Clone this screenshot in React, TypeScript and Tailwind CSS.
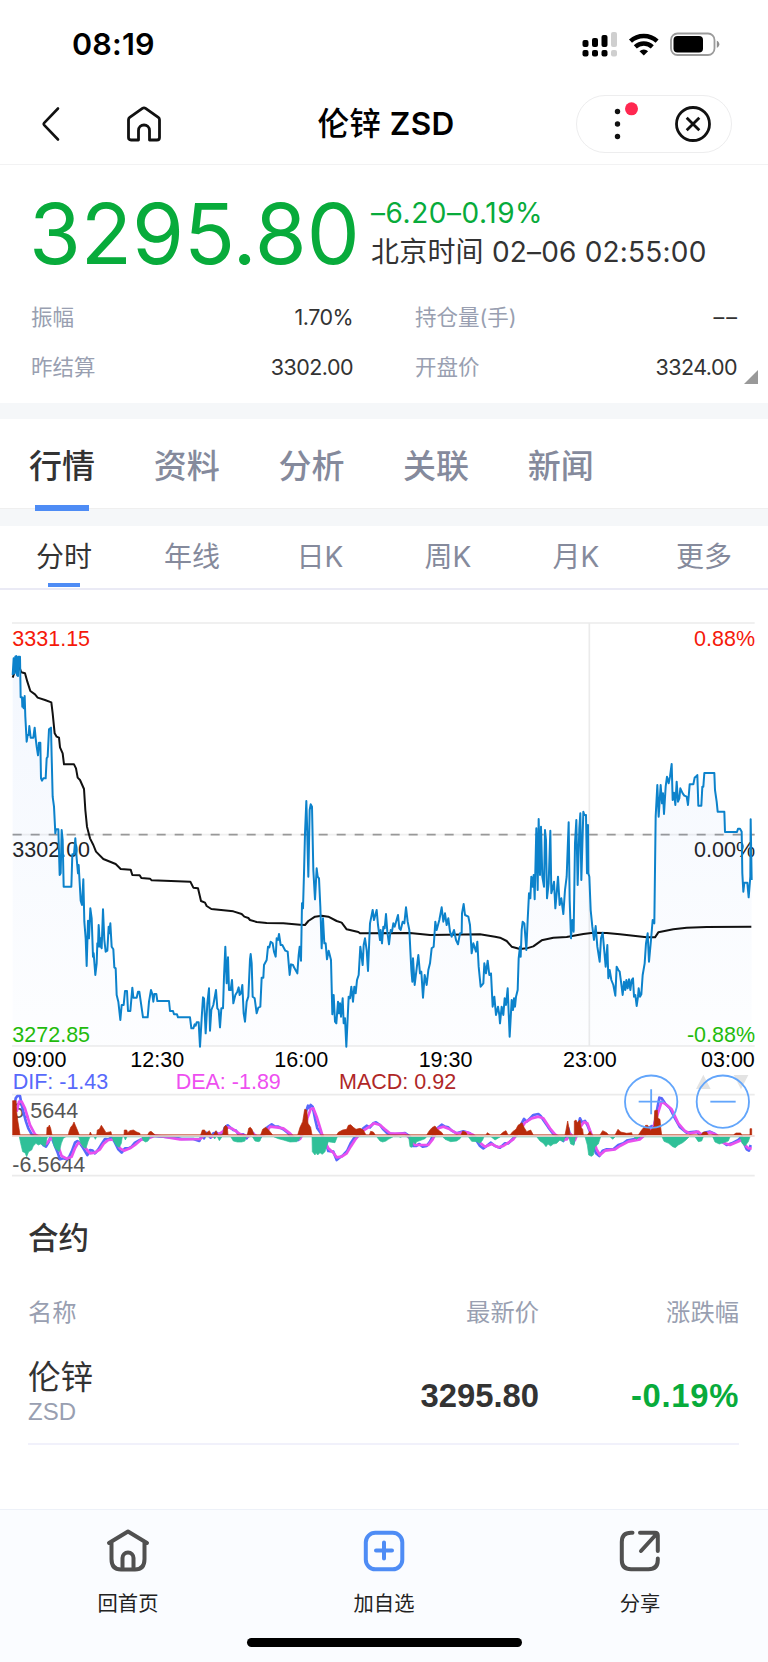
import type { ReactNode } from 'react';

interface Segment {
  offset: number;
  points: string;
}

interface Stat {
  label: string;
  value: string;
}

const stats: Stat[] = [
  { label: '振幅', value: '1.70%' },
  { label: '持仓量(手)', value: '– –' },
  { label: '昨结算', value: '3302.00' },
  { label: '开盘价', value: '3324.00' },
];

const mainTabs = ['行情', '资料', '分析', '关联', '新闻'];
const chartTabs = ['分时', '年线', '日K', '周K', '月K', '更多'];

const times = [
  { label: '09:00', x: 38 },
  { label: '12:30', x: 391 },
  { label: '16:00', x: 823 },
  { label: '19:30', x: 1256 },
  { label: '23:00', x: 1689 },
  { label: '03:00', x: 2103 },
];

// Chart units are a third of a CSS pixel
const priceSegments: Segment[] = [
  {
    offset: 0,
    points:
      '38,195 41,145 44,190 46,140 49,138 51,195 54,198 55,140 60,140 62,262 66,262 67,290 70,265 71,295 74,258 76,320 80,395 83,375 86,375 88,348 92,383 100,383 104,353 107,385 110,410 114,436 117,398 121,398 123,505 126,512 130,505 137,505 140,445 143,440 147,358 153,353 155,440 158,560 162,590 166,670 168,658 175,658 179,795 182,790 185,660 188,690 191,830 214,830 217,733 222,733 226,685 230,745 234,790 236,765 242,872 246,885 250,808 253,935 257,985 260,1068 264,932 267,985 271,895 275,925 279,1040 281,1030 286,1095 290,1060 292,1000 294,1010 296,945 300,1010 302,985 305,1015 309,898 313,990 317,1025 322,1022 326,950 328,970 331,940 335,1010 340,1018 343,1072 347,1075 350,1155 355,1175 361,1230 365,1185 371,1185 375,1143 381,1143 384,1203 391,1203 397,1133 400,1163 410,1163 414,1145 418,1145 429,1222 443,1222 447,1175 453,1140 457,1152 460,1175 463,1152 469,1152 472,1173 507,1173 510,1203 519,1203 522,1213 531,1213 534,1222 570,1222 574,1255 580,1255 584,1243 587,1247 590,1237 596,1237 600,1310 605,1225 609,1162 612,1165 617,1270 622,1180 627,1135 630,1262 634,1200 640,1185 648,1140 652,1195 656,1200 660,1252 664,1195 669,1195 672,1100 676,1010 680,1120 684,1042 687,1140 692,1140 696,1110 700,1180 706,1155 712,1145 716,1132 719,1155 723,1150 727,1125 731,1210 735,1235 740,1175 745,1160',
  },
  {
    offset: 750,
    points:
      '0,1048 2,1032 5,1060 8,1160 14,1165 20,1210 25,1193 31,1190 35,1103 40,1103 42,1065 50,1050 54,1010 58,1012 62,995 68,1000 72,1025 77,1040 80,985 84,990 87,972 92,1005 97,1005 106,1022 113,1025 119,1095 123,1063 129,1065 132,1072 142,1090 146,1035 149,1010 153,1052 156,880 159,895 162,790 165,670 169,573 171,640 175,800 179,600 182,583 186,590 190,780 195,868 200,775 203,800 207,805 211,890 215,1015 219,925 223,1000 227,1000 231,1048 236,1022 243,1050 247,1213 251,1155 255,1235 259,1240 264,1175 267,1210 270,1180 273,1220 278,1165 281,1240 285,1225 289,1310 296,1160 300,1165 304,1130 309,1175 313,1130 317,1150 321,1110 326,1095 331,1010 338,1065 341,1005 345,985 350,1020 354,1083 360,940 368,900 372,930 380,900 384,945 390,990 392,960 396,1000 400,950 404,955 408,912 412,965 417,1003 422,960 426,965 430,940 434,950 444,915 448,955 452,960 458,935 463,940 468,892 473,935 478,960 484,1080 487,1115 489,1045 494,1125 500,1075 505,1035 510,1090 514,1085 519,1163 524,1095 530,1125 535,1080 540,1060 545,1015 551,1010 556,935 560,960 568,930 575,892 580,935 585,910 590,945 595,925 600,965 605,980 612,960 618,990 624,1003 630,970 635,970 636,910 641,882 645,915 655,920 660,945 665,1030 670,1000 678,1025 682,995 686,1070 692,1130 700,1120 703,1060 708,1090 713,1052 718,1095 723,1090 728,1190 733,1160 738,1215 744,1190 748,1215',
  },
  {
    offset: 1500,
    points:
      '0,1240 5,1190 10,1215 14,1165 18,1185 23,1135 29,1280 35,1170 39,1200 42,1165 45,1190 48,1160 53,1140 56,1045 60,1010 62,1040 65,960 68,935 73,940 79,1020 83,930 87,850 91,865 94,800 98,830 101,795 104,868 109,655 113,840 116,627 120,795 123,650 127,800 132,830 135,660 138,690 141,865 146,820 151,662 154,850 158,835 162,815 166,895 170,850 174,800 179,885 184,865 190,912 195,840 200,800 206,637 209,870 213,985 217,930 221,965 225,700 229,630 233,825 238,655 241,610 244,810 250,605 253,615 258,615 261,790 264,645 265,790 268,800 272,900 277,950 282,990 287,948 292,1010 299,1055 303,985 308,968 313,1025 317,1070 322,1005 325,1105 329,1080 334,1110 340,1125 346,1157 350,1070 355,1080 359,1085 363,1115 368,1155 372,1115 376,1140 379,1110 383,1135 387,1108 391,1140 395,1110 399,1105 402,1160 406,1155 410,1188 414,1160 416,1135 420,1160 424,1153 428,1095 434,1060 438,1000 443,970 447,1055 453,990 458,930 463,940 467,620 472,525 476,620 482,525 486,580 489,550 492,612 497,530 501,500 506,520 510,500 515,462 518,570 522,548 526,585 530,515 534,575 538,565 541,535 548,550 553,557 560,560 564,585 569,523 580,523 584,503 588,500 592,495 595,587 604,587 607,530 610,530 613,489 643,489 645,540 650,575 653,605 673,605 675,666 711,666 714,656 720,656 725,665 727,790 730,845 733,818 742,818 746,862 751,800 752,628 755,810',
  },
];

const averageSegments: Segment[] = [
  {
    offset: 0,
    points:
      '38,203 46,180 56,165 64,187 75,190 82,215 91,243 105,253 113,263 135,270 154,277 158,310 164,370 170,380 177,383 180,412 188,430 192,463 222,463 228,475 233,503 240,510 252,537 256,600 261,650 270,685 280,705 288,725 310,747 347,762 362,777 392,779 397,795 419,796 424,804 450,806 455,811 571,815 580,833 594,835 603,873 615,878 620,888 634,897 700,904 725,912 733,920 745,924',
  },
  {
    offset: 750,
    points:
      '0,930 20,936 50,939 100,940 150,944 165,945 175,933 195,920 215,917 235,920 260,933 275,938 290,958 325,966 330,970 480,969 540,975 690,973 735,980',
  },
  {
    offset: 1500,
    points:
      '0,983 20,993 35,1010 60,1017 80,1015 100,1009 125,991 160,983 200,981 250,972 280,968 320,969 360,973 400,977 440,982 465,982 475,967 520,958 560,953 620,951 754,950',
  },
];

const difSegments: Segment[] = [
  {
    offset: 0,
    points:
      '44,195 47,175 52,168 60,168 64,190 70,215 78,245 85,265 95,283 105,288 120,300 130,315 138,320 145,308 152,290 158,300 165,318 172,335 180,358 190,355 200,358 208,350 215,335 225,308 232,303 240,310 250,325 262,345 270,330 278,332 285,340 295,328 305,312 315,297 325,298 335,292 345,308 355,328 365,338 375,325 385,325 395,320 405,308 420,300 430,296 440,300 455,285 465,288 490,290 520,292 545,297 580,297 598,303 606,285 612,295 618,278 625,282 632,293 640,280 650,278 658,285 668,280 675,262 683,256 690,262 700,270 708,272 715,282 730,283 740,295 752,272 760,280 768,295 780,293 790,280 802,262 815,253 825,260 835,260 850,268 865,280 880,300 895,300 905,285 912,260 918,215 924,197 928,205 932,195 938,200 945,235 952,265 965,283 978,310 985,333 1000,335 1010,360 1020,352 1030,345 1042,332 1052,310 1062,295 1075,285 1090,265 1100,257 1110,262 1120,250 1128,247',
  },
  {
    offset: 1140,
    points:
      '0,255 10,268 22,280 45,283 75,279 90,290 100,318 108,318 118,312 128,320 140,318 150,305 160,285 172,265 185,254 195,260 205,262 215,272 230,280 250,274 270,280 285,295 300,318 310,325 320,318 332,308 345,318 360,323 375,310 385,310 395,300 405,290 415,275 425,250 432,237 440,245 450,235 460,225 475,222 482,228 490,240 505,262 520,282 535,292 550,303 560,290 565,265 570,285 580,310 590,275 600,235 606,248 615,243 622,255 632,280 640,315 648,340 658,348 668,332 680,328 700,328 715,315 730,310 740,302 760,298 775,298 790,285 800,268 815,258 822,262 830,215 838,173 845,175 855,190 870,205 885,235 900,262 920,278 950,275 960,285 975,278 990,275 1005,282 1020,300 1040,315 1055,310 1075,300 1085,290 1092,310 1100,328 1107,332 1112,315',
  },
];

const deaSegments: Segment[] = [
  {
    offset: 0,
    points:
      '50,215 57,185 65,185 75,205 90,255 105,283 120,292 130,310 140,310 152,295 165,300 175,320 185,348 200,356 215,350 225,325 235,308 245,312 260,328 270,340 285,338 300,328 312,310 325,300 345,298 360,325 372,332 390,325 405,315 425,298 445,295 465,287 490,290 540,298 600,297 615,285 635,290 660,280 675,270 685,262 700,268 720,282 745,290 755,278 775,292 795,282 810,260 830,262 850,265 870,280 885,297 900,297 912,275 922,235 932,207 940,205 950,230 960,262 970,295 985,325 1000,338 1010,352 1025,350 1040,340 1052,320 1065,300 1085,275 1105,262 1122,250',
  },
  {
    offset: 1140,
    points:
      '0,255 15,268 30,280 75,281 95,300 105,315 125,315 145,315 158,298 175,265 190,260 210,268 230,280 260,277 280,285 300,308 315,320 335,312 355,322 370,318 385,308 400,298 420,270 435,248 455,235 475,230 490,235 510,265 525,283 545,298 560,298 572,282 585,300 600,262 612,246 622,250 635,285 650,328 660,345 675,332 705,328 720,318 745,305 780,298 800,280 820,262 832,225 845,185 860,195 875,208 895,250 915,273 930,280 955,275 965,285 990,277 1010,285 1030,308 1050,315 1085,300 1095,315 1105,325 1115,325',
  },
];

const positiveBars: Segment[] = [
  {
    offset: 0,
    points:
      '38,285 38,182 48,182 50,215 53,240 57,265 60,285 140,285 141,262 145,262 148,255 152,265 156,285 205,285 207,275 212,262 218,255 222,246 226,256 232,270 238,285 268,285 271,276 275,285 290,285 292,270 298,268 304,256 310,265 318,278 333,275 335,285 372,285 373,270 380,270 383,278 390,272 400,270 410,276 420,280 420,285 443,285 447,277 453,274 460,280 466,285 602,285 607,270 614,270 618,280 628,272 635,285 640,285 648,272 654,285 668,285 672,262 677,256 682,262 684,285 742,285 746,265 751,262 756,268 762,285 782,285 788,268 797,262 806,270 818,285 893,285 900,262 908,245 914,208 920,210 924,250 932,262 936,285 1010,285 1015,277 1028,270 1040,268 1045,256 1052,254 1060,262 1068,268 1080,265 1090,270 1098,285 1108,285 1112,274 1120,276 1126,285',
  },
  {
    offset: 1140,
    points:
      '140,285 148,272 156,263 165,258 172,268 186,278 190,285 243,285 248,273 258,277 262,285 318,285 322,278 332,285 360,285 370,276 378,272 384,285 390,285 398,275 408,268 414,256 426,248 432,262 440,275 452,270 460,285 555,285 558,270 563,243 568,270 570,285 583,285 583,243 588,240 592,248 600,240 603,262 608,268 610,285 622,285 630,274 636,285 660,285 668,272 680,278 686,285 705,285 714,268 722,276 740,280 755,278 757,285 775,285 785,270 797,256 803,256 806,262 812,272 822,258 824,212 832,210 834,235 840,238 842,262 845,285 963,285 970,276 980,276 984,285 1060,285 1068,279 1082,279 1085,285 1110,285 1110,266 1115,266 1115,285',
  },
];

const negativeBars: Segment[] = [
  {
    offset: 0,
    points:
      '58,290 62,310 68,335 75,338 80,350 86,335 95,330 100,318 108,310 115,315 122,312 128,315 135,320 140,300 142,290 156,290 160,312 165,325 172,330 178,335 184,310 190,295 198,290 236,290 242,310 250,322 258,325 264,305 270,290 282,290 286,298 290,290 335,290 342,305 350,318 358,322 364,310 367,290 372,290 376,300 381,290 425,290 430,302 437,306 444,303 450,290 640,290 644,297 648,290 652,290 658,302 666,290 692,290 700,303 712,306 725,306 735,303 738,290 757,290 765,303 775,305 780,303 784,290 820,290 835,296 850,300 870,306 890,305 898,298 902,290 936,290 937,335 945,345 948,338 953,345 960,338 967,343 975,335 980,318 985,305 995,307 1005,308 1012,290 1130,290',
  },
  {
    offset: 1140,
    points:
      '0,303 8,306 18,303 25,298 40,290 55,290 62,292 66,290 86,290 90,320 96,322 100,305 106,312 110,305 125,300 135,296 140,290 188,290 195,298 212,305 230,303 240,296 244,290 265,290 275,304 290,305 300,310 308,300 312,290 333,290 345,300 355,294 362,290 470,290 480,303 490,310 498,320 504,312 512,318 520,312 530,310 540,300 550,305 556,290 566,290 572,312 582,316 586,290 615,290 622,315 626,345 634,349 640,345 645,320 655,312 662,290 690,290 698,298 706,290 760,290 770,298 778,290 846,290 852,304 866,310 878,320 886,323 895,315 908,308 918,300 928,290 945,290 955,305 965,303 970,290 998,290 1005,306 1018,312 1030,308 1045,303 1050,290 1080,290 1086,310 1095,318 1105,305 1110,290',
  },
];

function join(segments: Segment[]) {
  return segments
    .flatMap(({ offset, points }) =>
      points.split(' ').map((p) => {
        const [x, y] = p.split(',').map(Number);
        return `${x + offset},${y}`;
      }),
    )
    .join(' ');
}

const pricePoints = join(priceSegments);

function StatusBar() {
  return (
    <div className="flex h-[84px] items-center justify-between pl-[72px] pr-[48px] pt-[4px] text-black">
      <span className="text-[30.500px] font-semibold leading-none tracking-[0.2px]">08:19</span>
      <svg className="h-[28px] w-[139px]" viewBox="0 0 139 28">
        <g fill="#000">
          <rect x="1.500" y="10" width="6" height="7" rx="2" />
          <rect x="11" y="8" width="6" height="9" rx="2" />
          <rect x="20.500" y="5" width="6" height="12" rx="2" />
          <rect x="1.500" y="20" width="6" height="6.500" rx="2" />
          <rect x="11" y="20" width="6" height="6.500" rx="2" />
          <rect x="20.500" y="20" width="6" height="6.500" rx="2" />
        </g>
        <g fill="#cfcfcf">
          <rect x="30" y="2" width="6" height="15" rx="2" />
          <rect x="30" y="20" width="6" height="6.500" rx="2" />
        </g>
        <g fill="none" stroke="#000" strokeWidth="4.400">
          <path d="M49.500 11.200a19.500 19.500 0 0 1 26.600 0" />
          <path d="M54.300 16.800a12.500 12.500 0 0 1 17 0" />
        </g>
        <path d="M62.800 25.600l-4.300-4.400a6.300 6.300 0 0 1 8.600 0z" fill="#000" />
        <rect x="90" y="3.500" width="43.500" height="21.500" rx="6.500" fill="none" stroke="#9b9b9b" strokeWidth="1.800" />
        <rect x="92.500" y="6" width="29.500" height="16.500" rx="4" fill="#000" />
        <path d="M135.800 10.800c3.400 1.300 3.400 5.700 0 7z" fill="#8f8f8f" />
      </svg>
    </div>
  );
}

function NavBar() {
  return (
    <header className="flex h-[81px] items-center border-b border-[#f2f2f3] pl-[40px] pr-[36px]">
      <div className="flex flex-1 items-center gap-[65px]">
        <svg className="h-[36px] w-[22px]" viewBox="0 0 22 36" fill="none" stroke="#111" strokeWidth="2.600" strokeLinecap="round" strokeLinejoin="round">
          <path d="M18 2.500L4 17.200a1.200 1.200 0 0 0 0 1.600L18 33.500" />
        </svg>
        <svg className="h-[36px] w-[34px]" viewBox="0 0 34 36" fill="none" stroke="#111" strokeWidth="2.800" strokeLinejoin="round">
          <path d="M1.500 13.800q0-1.600 1.200-2.500L15.400 2.400q1.600-1.100 3.200 0l12.700 8.900q1.200.9 1.200 2.500V31.500q0 2.500-2.500 2.500H22.500V24.500a5.500 5.500 0 0 0-11 0V34H4q-2.500 0-2.500-2.500z" />
        </svg>
      </div>
      <h1 className="text-[31.500px] font-medium leading-none tracking-[0.3px] text-black">
        伦锌 <span className="font-semibold">ZSD</span>
      </h1>
      <div className="flex flex-1 justify-end">
        <div className="flex h-[58px] w-[156px] items-center rounded-full border border-[#ededee]">
          <svg className="h-[56px] w-full" viewBox="0 0 154 56">
            <g fill="#111">
              <circle cx="40.500" cy="15.500" r="2.700" />
              <circle cx="40.500" cy="28" r="2.700" />
              <circle cx="40.500" cy="40.500" r="2.700" />
            </g>
            <circle cx="54.500" cy="12.800" r="6.500" fill="#ff2850" />
            <circle cx="116" cy="28" r="16.500" fill="none" stroke="#111" strokeWidth="2.800" />
            <path d="M109.700 21.700l12.600 12.600M122.300 21.700l-12.600 12.600" stroke="#111" strokeWidth="2.800" />
          </svg>
        </div>
      </div>
    </header>
  );
}

function Quote() {
  return (
    <section className="relative h-[238px] px-[31px] pt-[25px]">
      <div className="flex items-start">
        <span className="-ml-[2px] w-[342px] shrink-0 whitespace-nowrap text-[84px] leading-[88px] tracking-[-0.100px] text-[#08ab3b]">3295.80</span>
        <div className="whitespace-nowrap pt-[4px]">
          <p className="text-[28px] leading-[39px] tracking-[0.550px] text-[#08ab3b]">–6.20–0.19%</p>
          <p className="text-[28px] leading-[39px] tracking-[0.200px] text-[#333]">北京时间 02–06 02:55:00</p>
        </div>
      </div>
      <dl className="mt-[14px] grid grid-cols-2 gap-x-[62px] text-[21.500px] leading-[50px]">
        {stats.map((stat) => (
          <div key={stat.label} className="flex justify-between">
            <dt className="text-[#999fb1]">{stat.label}</dt>
            <dd className={stat.value === '– –' ? 'text-[#333] [word-spacing:-4px]' : 'tracking-[-0.550px] text-[#333]'}>{stat.value}</dd>
          </div>
        ))}
      </dl>
      <svg className="absolute right-[10px] top-[205px] h-[14px] w-[14px]" viewBox="0 0 14 14">
        <path d="M14 0v14H0z" fill="#999" />
      </svg>
    </section>
  );
}

function MainTabs() {
  return (
    <nav className="flex h-[89px] gap-[58.700px] pl-[29px] text-[33px] font-medium leading-[94px]">
      {mainTabs.map((tab, i) => (
        <div key={tab} className={i === 0 ? 'relative text-[#333]' : 'text-[#858a9c]'}>
          {tab}
          {i === 0 && <span className="absolute left-[6px] top-[86px] h-[6px] w-[54px] bg-[#4e8cf5]" />}
        </div>
      ))}
    </nav>
  );
}

function ChartTabs() {
  return (
    <nav className="grid h-[64px] grid-cols-6 border-b-2 border-[#eaeaf5] text-center text-[28px] leading-[63px]">
      {chartTabs.map((tab, i) => (
        <div key={tab} className={i === 0 ? 'relative text-[#333]' : 'text-[#858a9c]'}>
          {tab}
          {i === 0 && <span className="absolute bottom-[2px] left-[48px] h-[4px] w-[32px] bg-[#4e8cf5]" />}
        </div>
      ))}
    </nav>
  );
}

function Chart() {
  return (
    <svg
      className="mt-[20px] block h-[575px] w-full shrink-0 font-['Liberation_Sans',Arial,sans-serif]"
      viewBox="0 0 2304 1725"
      fontSize="64.500"
    >
      <defs>
        <linearGradient id="area" x1="0" y1="130" x2="0" y2="1308" gradientUnits="userSpaceOnUse">
          <stop offset="0" stopColor="#3f7ff0" stopOpacity="0.06" />
          <stop offset="1" stopColor="#3f7ff0" stopOpacity="0.012" />
        </linearGradient>
      </defs>

      {/* Grid */}
      <g stroke="#ebebeb" strokeWidth="5">
        <path d="M36 39H2264M36 1308H2264M1768 39V1308M36 1454H2264M36 1697H2264" />
        <path d="M36 674H2264" stroke="#f0f0f0" />
      </g>
      <path d="M38 674H2264" stroke="#999" strokeWidth="5.500" strokeDasharray="27 27" />

      {/* Axis labels */}
      <text x="37" y="107" fill="#f5190a">3331.15</text>
      <text x="37" y="742" fill="#222">3302.00</text>
      <text x="37" y="1297" fill="#1fbc0a">3272.85</text>
      <g textAnchor="end">
        <text x="2265" y="107" fill="#f5190a">0.88%</text>
        <text x="2265" y="742" fill="#222">0.00%</text>
        <text x="2265" y="1297" fill="#1fbc0a">-0.88%</text>
      </g>
      {times.map((t) => (
        <text key={t.label} x={t.x} y="1372" fill="#000">{t.label}</text>
      ))}

      <polygon points={`38,1308 ${pricePoints} 2255,1308`} fill="url(#area)" />
      <polyline points={join(averageSegments)} fill="none" stroke="#111" strokeWidth="6" strokeLinejoin="round" />
      <polyline points={pricePoints} fill="none" stroke="#0c82cb" strokeWidth="6" strokeLinejoin="round" />

      {/* MACD */}
      <g transform="translate(0 1290)">
        <text x="38" y="148" fill="#5869fb">DIF: -1.43</text>
        <text x="527" y="148" fill="#ee4ff0">DEA: -1.89</text>
        <text x="1017" y="148" fill="#af2727">MACD: 0.92</text>
        <text x="37" y="233" fill="#555">6.5644</text>
        <text x="37" y="395" fill="#555">-6.5644</text>
        <path d="M2088 147l22-43 22 43zM2201 105h44l-22 43z" fill="#e3e3e3" />
        <polyline points={join(difSegments)} fill="none" stroke="#5869fb" strokeWidth="8" strokeLinejoin="round" />
        <polyline points={join(deaSegments)} fill="none" stroke="#e850ee" strokeWidth="8" strokeLinejoin="round" />
        <polygon points={join(positiveBars)} fill="#b92b0b" stroke="#b92b0b" strokeWidth="2" />
        <polygon points={`58,290 ${join(negativeBars)}`} fill="#2fc098" stroke="#2fc098" strokeWidth="2" />
        <path d="M36 288H2264" stroke="#ecd3d0" strokeWidth="5" />
        <g fill="none" stroke="#62a5fb" strokeWidth="5.500">
          <circle cx="1953.500" cy="185" r="78.500" />
          <path d="M1916 185h75M1953.500 148v75" />
          <circle cx="2168.500" cy="185" r="78.500" />
          <path d="M2131 185h76" />
        </g>
      </g>
    </svg>
  );
}

function Contracts() {
  return (
    <section className="h-[324px] shrink-0 pl-[28px] pr-[29px] pt-[30px]">
      <h2 className="text-[30.500px] font-medium leading-[46px] text-[#333]">合约</h2>
      <div className="mt-[31px] grid grid-cols-[1fr_200px_200px] text-right text-[24.300px] leading-[40px] text-[#999fb1]">
        <span className="text-left">名称</span>
        <span>最新价</span>
        <span>涨跌幅</span>
      </div>
      <div className="mt-[18px] grid h-[95px] grid-cols-[1fr_200px_200px] items-center border-b-2 border-[#f1f1fb] text-right font-['Liberation_Sans','Noto_Sans_CJK_SC',sans-serif] text-[32.800px] font-bold leading-none">
        <div className="self-start pt-[6px] text-left font-normal">
          <p className="text-[32.500px] leading-[44px] text-[#333]">伦锌</p>
          <p className="text-[24px] leading-[24px] text-[#999fb1]">ZSD</p>
        </div>
        <span className="text-[#333]">3295.80</span>
        <span className="tracking-[0.700px] text-[#08ab3b]">-0.19%</span>
      </div>
    </section>
  );
}

function Action({ label, children }: { label: string; children: ReactNode }) {
  return (
    <div className="flex flex-col items-center">
      <svg className="h-[44px] w-[44px]" viewBox="0 0 44 44" fill="none" strokeWidth="4" strokeLinecap="round" strokeLinejoin="round">
        {children}
      </svg>
      <span className="mt-[17px] text-[20.300px] leading-[30px] text-[#222]">{label}</span>
    </div>
  );
}

function BottomBar() {
  return (
    <footer className="flex h-[153px] shrink-0 flex-col items-center border-t border-[#edf1f8] bg-[#fafcff] pt-[18px]">
      <div className="grid w-full grid-cols-3">
        <Action label="回首页">
          <g stroke="#505050">
            <path d="M3 15L22 3.500L41 15M5.500 14.500V31Q5.500 41.500 15 41.500H29Q38.500 41.500 38.500 31V14.500" />
            <path d="M16.500 40.500V30a5.500 5.500 0 0 1 11 0V40.500" />
          </g>
        </Action>
        <Action label="加自选">
          <rect x="3.800" y="4.800" width="36.500" height="36.500" rx="9.500" stroke="#4e8cf5" />
          <path d="M22 14.500v16M14 22.500h16" stroke="#4e8cf5" />
        </Action>
        <Action label="分享">
          <g stroke="#505050">
            <path d="M14.500 4.800H13Q3.800 4.800 3.800 14V32Q3.800 41.300 13 41.300H30.500Q39.800 41.300 39.800 32V30.500" />
            <path d="M22 4.800H37Q39.800 4.800 39.800 7.500V23M38.500 6L23 23" />
          </g>
        </Action>
      </div>
      <div className="mt-[19px] h-[9px] w-[275px] rounded-full bg-black" />
    </footer>
  );
}

export default function App() {
  return (
    <div className="flex h-[1662px] w-[768px] flex-col overflow-hidden bg-white font-['Inter','Noto_Sans_CJK_SC',sans-serif]">
      <StatusBar />
      <NavBar />
      <Quote />
      <div className="h-[16px] shrink-0 bg-[#f5f7f9]" />
      <MainTabs />
      <div className="h-[18px] shrink-0 border-t border-[#efefef] bg-[#f5f7f9]" />
      <ChartTabs />
      <Chart />
      <Contracts />
      <BottomBar />
    </div>
  );
}
